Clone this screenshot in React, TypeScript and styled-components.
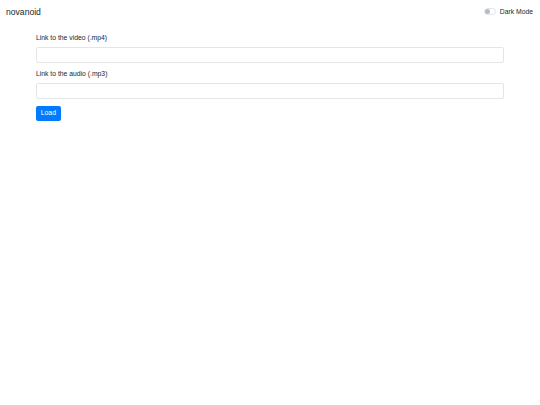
import { useState } from 'react';
import styled, { createGlobalStyle } from 'styled-components';

const GlobalStyle = createGlobalStyle`
  html, body {
    margin: 0;
    padding: 0;
    background: #fff;
  }
  body {
    font-family: "Liberation Sans", Arial, sans-serif;
    font-size: 6.8px;
    line-height: 1.5;
    color: #212529;
  }
  * {
    box-sizing: border-box;
  }
`;

const App = () => {
  const [dark, setDark] = useState(false);
  const [video, setVideo] = useState('');
  const [audio, setAudio] = useState('');

  return (
    <>
      <GlobalStyle />
      <Navbar>
        <Brand>novanoid</Brand>
        <Switch onClick={() => setDark(!dark)}>
          <SwitchTrack $on={dark}>
            <SwitchKnob $on={dark} />
          </SwitchTrack>
          <SwitchLabel>Dark Mode</SwitchLabel>
        </Switch>
      </Navbar>
      <Container>
        <FormGroup>
          <Label htmlFor="video">Link to the video (.mp4)</Label>
          <Input
            id="video"
            value={video}
            onChange={(e) => setVideo(e.target.value)}
          />
        </FormGroup>
        <FormGroup>
          <Label htmlFor="audio">Link to the audio (.mp3)</Label>
          <Input
            id="audio"
            value={audio}
            onChange={(e) => setAudio(e.target.value)}
          />
        </FormGroup>
        <Button type="button">Load</Button>
      </Container>
    </>
  );
};

export default App;

const Navbar = styled.nav`
  display: flex;
  align-items: center;
  justify-content: space-between;
  padding: 3.5px 7px 3.5px 6px;
`;

const Brand = styled.span`
  font-size: 8.6px;
  line-height: 1.5;
  padding: 2.2px 0;
  color: #212529;
`;

const Switch = styled.div`
  display: flex;
  align-items: center;
  gap: 4px;
  cursor: pointer;
  margin-top: -0.5px;
`;

const SwitchTrack = styled.span<{ $on: boolean }>`
  position: relative;
  width: 12px;
  height: 7px;
  border-radius: 3.5px;
  border: 1px solid ${({ $on }) => ($on ? '#007bff' : '#e2e5e8')};
  background: ${({ $on }) => ($on ? '#007bff' : '#fff')};
`;

const SwitchKnob = styled.span<{ $on: boolean }>`
  position: absolute;
  top: 0;
  left: ${({ $on }) => ($on ? '5px' : '0')};
  width: 5px;
  height: 5px;
  border-radius: 50%;
  background: ${({ $on }) => ($on ? '#fff' : '#b5bcc3')};
`;

const SwitchLabel = styled.span`
  font-size: 6.8px;
  line-height: 1.5;
  color: #212529;
`;

const Container = styled.main`
  width: 468px;
  margin: 9px auto 0;
`;

const FormGroup = styled.div`
  display: flex;
  flex-direction: column;
  margin-bottom: 6.5px;
`;

const Label = styled.label`
  font-size: 6.8px;
  line-height: 1.5;
  margin-bottom: 3.5px;
`;

const Input = styled.input`
  height: 16px;
  padding: 2.6px 5.25px;
  font: inherit;
  color: #495057;
  background: #fff;
  border: 1px solid #e3e6e9;
  border-radius: 2px;
  outline: none;
`;

const Button = styled.button`
  font-family: inherit;
  font-size: 6.8px;
  line-height: 1.5;
  color: #fff;
  background: #007bff;
  border: none;
  border-radius: 2px;
  padding: 2.5px 4.8px;
  cursor: pointer;
`;
